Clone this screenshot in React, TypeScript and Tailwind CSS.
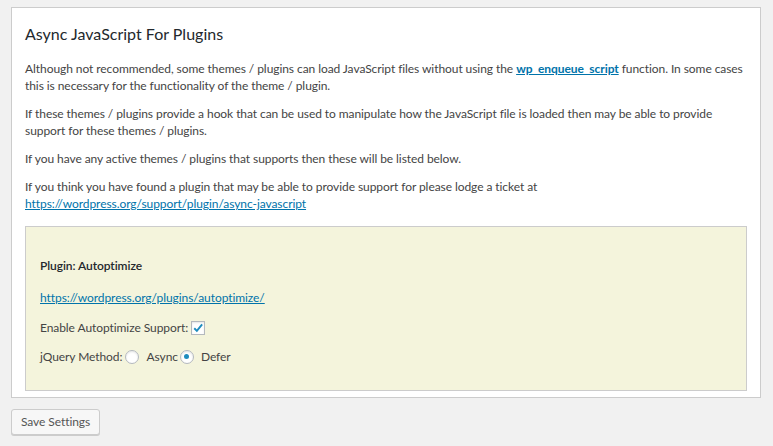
import React from 'react';

const font = { fontFamily: 'Lato, "Liberation Sans", sans-serif' };

function Checkbox({ checked }: { checked: boolean }) {
  return (
    <span className="inline-flex w-[14px] h-[14px] border border-[#b4b9be] bg-white shadow-[inset_0_1px_2px_rgba(0,0,0,0.1)] items-center justify-center align-middle">
      {checked && (
        <svg viewBox="0 0 16 16" className="w-[14px] h-[14px]">
          <path d="M3 8.3 L6.5 11.8 L13.5 3.3" fill="none" stroke="#1e8cbe" strokeWidth="2.6" />
        </svg>
      )}
    </span>
  );
}

function Radio({ checked }: { checked: boolean }) {
  return (
    <span className="inline-flex w-[14px] h-[14px] rounded-full border border-[#b4b9be] bg-white shadow-[inset_0_1px_2px_rgba(0,0,0,0.1)] items-center justify-center">
      {checked && <span className="w-[5px] h-[5px] rounded-full bg-[#1e8cbe]" />}
    </span>
  );
}

export default function App() {
  return (
    <div className="min-h-[446px] bg-[#f1f1f1] pt-[7px] px-[11px] text-[12px] leading-[17px] tracking-[-0.07px] text-[#444]" style={font}>
      <div className="w-[750px] border border-[#ccc] bg-white px-[13px] pt-[16px] pb-[6px]">
        <h2 className="text-[16px] leading-[20px] font-normal tracking-normal text-[#23282d] mb-[16px]">
          Async JavaScript For Plugins
        </h2>
        <p className="mb-[11px] whitespace-nowrap">
          Although not recommended, some themes / plugins can load JavaScript files without using the{' '}
          <a className="font-bold text-[#0073aa] underline">wp_enqueue_script</a> function. In some cases
          <br />
          this is necessary for the functionality of the theme / plugin.
        </p>
        <p className="mb-[11px] whitespace-nowrap">
          If these themes / plugins provide a hook that can be used to manipulate how the JavaScript file is loaded then may be able to provide
          <br />
          support for these themes / plugins.
        </p>
        <p className="mb-[11px]">
          If you have any active themes / plugins that supports then these will be listed below.
        </p>
        <p className="mb-[14px] whitespace-nowrap">
          If you think you have found a plugin that may be able to provide support for please lodge a ticket at
          <br />
          <a className="text-[#0073aa] underline">https://wordpress.org/support/plugin/async-javascript</a>
        </p>
        <div className="border border-[#ccc] bg-[#f4f4dc] px-[14px] pt-[30px] pb-[25px]">
          <p className="font-semibold text-[#23282d] mb-[15px]">Plugin: Autoptimize</p>
          <p className="mb-[13px]">
            <a className="text-[#0073aa] underline">https://wordpress.org/plugins/autoptimize/</a>
          </p>
          <div className="flex items-center gap-[3px] mb-[12px]">
            <span>Enable Autoptimize Support:</span>
            <Checkbox checked />
          </div>
          <div className="flex items-center">
            <span className="mr-[3px]">jQuery Method:</span>
            <Radio checked={false} />
            <span className="ml-[7px] mr-[2px]">Async</span>
            <Radio checked />
            <span className="ml-[7px]">Defer</span>
          </div>
        </div>
      </div>
      <button className="mt-[11px] h-[26px] px-[9px] border border-[#ccc] rounded-[3px] bg-[#f7f7f7] shadow-[0_1px_0_#ccc] text-[#555] text-[12px] leading-[24px]">
        Save Settings
      </button>
    </div>
  );
}
